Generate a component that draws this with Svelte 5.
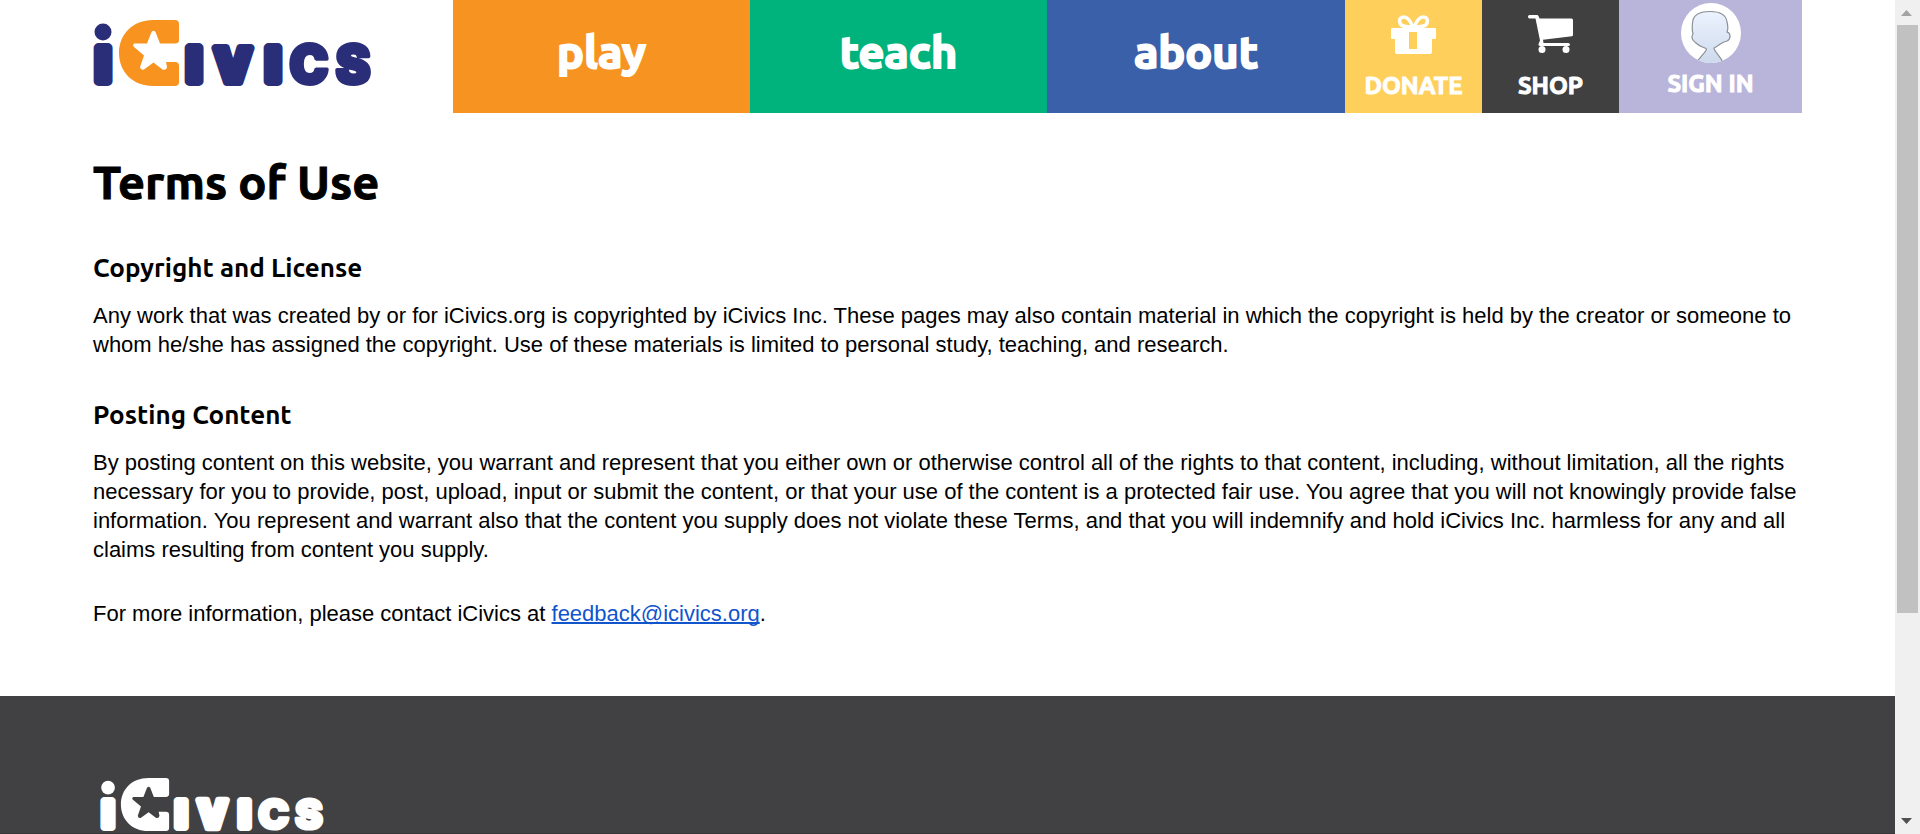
<script>
  const sections = [
    {
      title: 'Copyright and License',
      body: 'Any work that was created by or for iCivics.org is copyrighted by iCivics Inc. These pages may also contain material in which the copyright is held by the creator or someone to whom he/she has assigned the copyright. Use of these materials is limited to personal study, teaching, and research.'
    },
    {
      title: 'Posting Content',
      body: 'By posting content on this website, you warrant and represent that you either own or otherwise control all of the rights to that content, including, without limitation, all the rights necessary for you to provide, post, upload, input or submit the content, or that your use of the content is a protected fair use. You agree that you will not knowingly provide false information. You represent and warrant also that the content you supply does not violate these Terms, and that you will indemnify and hold iCivics Inc. harmless for any and all claims resulting from content you supply.'
    }
  ];
</script>

{#snippet logo()}
  <svg viewBox="0 0 280 66" aria-hidden="true">
    <circle class="ink" cx="10" cy="12" r="8.5" />
    <g class="ink word">
      <text class="stem" x="10" y="61">I</text>
      <text class="stem" x="101" y="61">I</text>
      <text class="vee" x="140" y="62">V</text>
      <text class="stem" x="180" y="61">I</text>
      <text class="round" x="216" y="63">C</text>
      <text class="round" x="260" y="63">S</text>
    </g>
    <path
      class="accent"
      d="M60 0H82Q86 0 86 4V20Q86 23.5 82 23.5H67L62.5 12Q60.5 9.5 58.5 12L54 23.5H41.5Q39 24.5 41 27L51 35.5L47 47Q47.5 50.5 51 49.5L60.5 42.5L69.5 49.5Q73.5 50.5 74 47L73 42H82Q86 42 86 46V62Q86 66 82 66H60C40 66 26 52 26 33C26 14 40 0 60 0Z"
    />
  </svg>
{/snippet}

<div class="screen">
  <div class="page">
    <header class="container top">
      <a class="brand" href="/" aria-label="iCivics">{@render logo()}</a>
      <nav>
        <a class="main play" href="/play">play</a>
        <a class="main teach" href="/teach">teach</a>
        <a class="main about" href="/about">about</a>
        <a class="tool donate" href="/donate">
          <svg width="45" height="39" viewBox="0 0 45 39" aria-hidden="true">
            <g fill="none" stroke="#fff" stroke-width="3.5">
              <path d="M22 12C19 5 16 2 13 2C9 2 8 5 9 8C10 12 16 12 22 12Z" />
              <path d="M23 12C26 5 29 2 32 2C36 2 37 5 36 8C35 12 29 12 23 12Z" />
            </g>
            <path fill="#fff" fill-rule="evenodd" d="M1 13H44Q45 13 45 14V23Q45 24 44 24H41V37Q41 39 39 39H6Q4 39 4 37V24H1Q0 24 0 23V14Q0 13 1 13ZM18 17V34H26V17Z" />
          </svg>
          <span>DONATE</span>
        </a>
        <a class="tool shop" href="/shop">
          <svg width="45" height="39" viewBox="0 0 45 39" aria-hidden="true">
            <path fill="#fff" d="M1.5 0H9Q10 0 10.5 1L11.5 3.5H43.5Q45 3.5 45 5V20Q45 21 44 21.3L15 24.8L15.5 28H40Q42 28 42 29.5Q42 31 40 31H12Q10 31 10.5 29L12 25.5L7.5 3.5H1.5Q0 3.5 0 1.7Q0 0 1.5 0Z" />
            <circle fill="#fff" cx="14" cy="34.5" r="3.5" />
            <circle fill="#fff" cx="38" cy="34.5" r="3.5" />
          </svg>
          <span>SHOP</span>
        </a>
        <a class="tool signin" href="/login">
          <svg width="60" height="60" viewBox="0 0 60 60" aria-hidden="true">
            <defs>
              <linearGradient id="skin" x1="0" y1="0" x2="0" y2="1">
                <stop offset="0" stop-color="#edf3ff" />
                <stop offset="1" stop-color="#ccd9ec" />
              </linearGradient>
              <clipPath id="round"><circle cx="30" cy="30" r="30" /></clipPath>
            </defs>
            <circle cx="30" cy="30" r="30" fill="#fff" />
            <path
              clip-path="url(#round)"
              fill="url(#skin)"
              stroke="#8b9096"
              stroke-width="1.2"
              d="M15 62C17 54 25 50 25.5 46C24 44 20 45 15 40C11 37 10 34 12 31C11 27 11 22 12 17C14 10 21 8.5 29 8.5C38 8.5 45 11 46 19C47 23 47 27 46 29C50 30 50 36 46 38C40 39 38 43 33 45C33 49 41 54 43 62Z"
            />
          </svg>
          <span>SIGN IN</span>
        </a>
      </nav>
    </header>

    <main class="container">
      <h1>Terms of Use</h1>
      {#each sections as section}
        <section>
          <h2>{section.title}</h2>
          <p>{section.body}</p>
        </section>
      {/each}
      <p class="contact">
        For more information, please contact iCivics at
        <a href="mailto:feedback@icivics.org">feedback@icivics.org</a>.
      </p>
    </main>

    <footer>
      <div class="container">
        <a class="brand light" href="/" aria-label="iCivics home">{@render logo()}</a>
      </div>
    </footer>
  </div>

  <div class="scrollbar" aria-hidden="true">
    <svg width="11" height="6" viewBox="0 0 11 6"><path fill="#a3a3a3" d="M0 6L5.5 0L11 6Z" /></svg>
    <div class="track"><div class="thumb"></div></div>
    <svg width="11" height="6" viewBox="0 0 11 6"><path fill="#505050" d="M0 0L5.5 6L11 0Z" /></svg>
  </div>
</div>

<style>
  :global(body) {
    margin: 0;
    background: #fff;
  }
  .screen {
    display: grid;
    grid-template-columns: minmax(0, 1fr) 25px;
    height: 100vh;
    overflow: hidden;
    font-family: 'Liberation Sans', Arial, sans-serif;
    font-size: 22px;
    line-height: 29px;
    color: #000;
  }
  .page {
    display: flex;
    flex-direction: column;
    min-height: 0;
    overflow: hidden;
  }
  .container {
    box-sizing: border-box;
    width: 100%;
    padding-left: 93px;
    padding-right: 93px;
  }
  .top {
    display: flex;
    gap: 80px;
    flex: none;
  }
  .brand {
    display: block;
    flex: none;
    width: 280px;
    padding-top: 20px;
  }
  .brand svg {
    display: block;
    width: 100%;
    overflow: visible;
  }
  .ink {
    fill: #2a2e79;
    stroke: #2a2e79;
    stroke-width: 0;
  }
  .accent {
    fill: #f7931e;
  }
  .word {
    font-family: Inter, sans-serif;
    font-weight: 900;
    text-anchor: middle;
    stroke-linejoin: round;
  }
  .stem {
    font-size: 45px;
    stroke-width: 10px;
  }
  .vee {
    font-size: 47px;
    stroke-width: 8px;
  }
  .round {
    font-size: 52px;
    stroke-width: 4px;
  }
  nav {
    flex: 1;
    display: grid;
    grid-template-columns: 297fr 297fr 298fr 137fr 137fr 183fr;
    height: 113px;
    font-family: Ubuntu, 'Noto Sans', sans-serif;
    font-weight: 700;
  }
  nav a {
    display: flex;
    flex-direction: column;
    align-items: center;
    color: #fff;
    text-decoration: none;
  }
  .main {
    justify-content: center;
    padding-bottom: 10px;
    font-size: 45px;
    line-height: 48px;
    -webkit-text-stroke: 2px currentColor;
    paint-order: stroke fill;
  }
  .tool {
    gap: 17px;
    padding-top: 15px;
    font-size: 24px;
    line-height: 29px;
  }
  .tool span {
    -webkit-text-stroke: 1px currentColor;
  }
  nav svg {
    flex: none;
  }
  .play { background: #f79321; }
  .teach { background: #00b27c; }
  .about { background: #3b60aa; }
  .donate { background: #ffcf5c; }
  .shop { background: #404040; }
  .signin {
    gap: 6px;
    padding-top: 3px;
    background: #b9b4da;
  }
  main {
    flex: none;
    padding-bottom: 68px;
  }
  h1,
  h2 {
    margin: 0;
    font-family: Ubuntu, 'Noto Sans', sans-serif;
    font-weight: 700;
  }
  h1 {
    padding-top: 41px;
    font-size: 47px;
    line-height: 56px;
    -webkit-text-stroke: 1px currentColor;
  }
  h2 {
    padding-bottom: 17px;
    font-size: 26px;
    line-height: 32px;
  }
  section {
    padding-top: 42px;
  }
  section + section {
    padding-top: 40px;
  }
  p {
    margin: 0;
  }
  .contact {
    padding-top: 35px;
  }
  p a {
    color: #1155cc;
    text-decoration-thickness: 2px;
    text-decoration-skip-ink: none;
  }
  footer {
    flex: 1;
    padding-top: 62px;
    background: #414042;
    overflow: hidden;
    border-bottom: 1px solid #363537;
  }
  .light {
    width: 225px;
    margin-left: 7px;
  }
  .light .ink,
  .light .accent {
    fill: #fff;
  }
  .light .ink {
    stroke: #fff;
  }
  .scrollbar {
    display: flex;
    flex-direction: column;
    align-items: center;
    gap: 9px;
    padding: 10px 3px 10px 0;
    background: #f0f0f0;
  }
  .track {
    flex: 1;
    align-self: stretch;
    padding-left: 2px;
  }
  .thumb {
    width: 21px;
    height: 75%;
    background: #c1c1c1;
  }
</style>
